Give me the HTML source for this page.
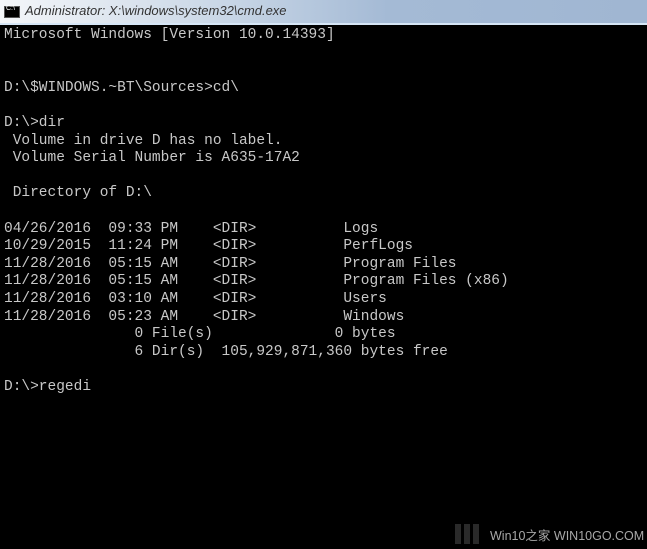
<!DOCTYPE html>
<html><head><style>
body{margin:0;width:647px;height:549px;background:#000;overflow:hidden;position:relative}
.tb{position:absolute;left:0;top:0;width:647px;height:23px;background:linear-gradient(to right,#f4f6f9 0%,#c8d6e6 35%,#a4bad5 60%,#a0b6d2 100%)}
.tb2{position:absolute;left:0;top:23px;width:647px;height:2px;background:#d6e6f6}
.ic{position:absolute;left:4px;top:6px;width:14px;height:10px;background:#000;border:1px solid #555}
.ic:after{content:"C:\\";position:absolute;left:1px;top:-2px;font:7px "Liberation Sans";color:#fff}
.tt{position:absolute;left:25px;top:3px;font:italic 13px "Liberation Sans",sans-serif;color:#333;white-space:nowrap}
pre{position:absolute;left:4px;top:27px;margin:0;font:14.5px/17.6px "Liberation Mono",monospace;color:#c8c8c8}
.wm{position:absolute;top:525px;font:12.5px "Liberation Sans","Noto Sans CJK SC",sans-serif;color:#a8a8a8;white-space:nowrap}
.bars{position:absolute;top:524px;width:6px;height:20px;background:#2a2a2a}
</style></head><body>
<div class="tb"></div><div class="tb2"></div><div class="ic"></div>
<div class="tt">Administrator: X:\windows\system32\cmd.exe</div>
<pre>Microsoft Windows [Version 10.0.14393]


D:\$WINDOWS.~BT\Sources&gt;cd\

D:\&gt;dir
 Volume in drive D has no label.
 Volume Serial Number is A635-17A2

 Directory of D:\

04/26/2016  09:33 PM    &lt;DIR&gt;          Logs
10/29/2015  11:24 PM    &lt;DIR&gt;          PerfLogs
11/28/2016  05:15 AM    &lt;DIR&gt;          Program Files
11/28/2016  05:15 AM    &lt;DIR&gt;          Program Files (x86)
11/28/2016  03:10 AM    &lt;DIR&gt;          Users
11/28/2016  05:23 AM    &lt;DIR&gt;          Windows
               0 File(s)              0 bytes
               6 Dir(s)  105,929,871,360 bytes free

D:\&gt;regedi</pre>
<div class="bars" style="left:455px"></div><div class="bars" style="left:464px"></div><div class="bars" style="left:473px"></div>
<div class="wm" style="left:490px">Win10之家 WIN10GO.COM</div>
</body></html>
